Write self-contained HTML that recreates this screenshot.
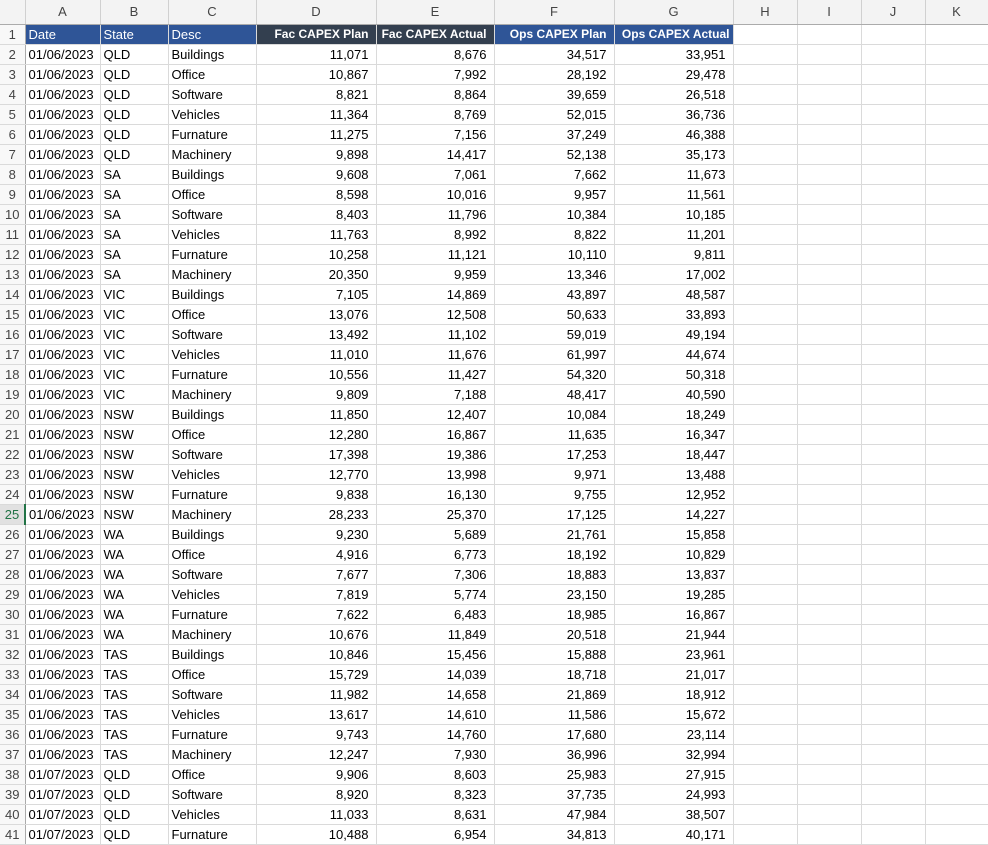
<!DOCTYPE html>
<html><head><meta charset="utf-8"><style>
body{margin:0;width:988px;height:832px;overflow:hidden;background:#fff;font-family:"Liberation Sans",Arial,sans-serif;}
table{border-collapse:collapse;table-layout:fixed;position:absolute;left:0;top:0;width:988px;}
td{height:19px;padding:0 3px;border-right:1px solid #dadada;border-bottom:1px solid #dadada;font-size:13px;color:#000;white-space:nowrap;overflow:hidden;box-sizing:border-box;}
tr.ch td{height:24px;background:#f3f3f3;color:#444;text-align:center;font-size:13px;border-bottom:1px solid #ababab;border-right:1px solid #d0d0d0}
td.rh{background:#f8f8f8;color:#444;text-align:center;padding:0;border-right:1px solid #ababab;border-bottom:1px solid #dadada}
td.n{text-align:right;padding-right:7px}
tr.h td.b{background:#2f5597;color:#fff;font-weight:normal}
tr.h td.d{background:#333f4f;color:#fff;font-weight:bold;font-size:12px;padding-left:0}
tr.h td.bb{background:#2f5597;color:#fff;font-weight:bold;font-size:12px;padding-left:0}
tr{height:20px}
td.sel{color:#217346;border-right:2px solid #217346;background:#e1e1e1}
</style></head><body>
<table>
<colgroup><col style="width:25px"><col style="width:75px"><col style="width:68px"><col style="width:88px"><col style="width:120px"><col style="width:118px"><col style="width:120px"><col style="width:119px"><col style="width:64px"><col style="width:64px"><col style="width:64px"><col style="width:63px"></colgroup>
<tr class="ch" style="height:24px"><td style="background:#f3f3f3"></td><td>A</td><td>B</td><td>C</td><td>D</td><td>E</td><td>F</td><td>G</td><td>H</td><td>I</td><td>J</td><td>K</td></tr>
<tr class="h"><td class="rh">1</td><td class="b">Date</td><td class="b">State</td><td class="b">Desc</td><td class="d n">Fac CAPEX Plan</td><td class="d n">Fac CAPEX Actual</td><td class="bb n">Ops CAPEX Plan</td><td class="bb n" style="padding-right:3px">Ops CAPEX Actual</td><td></td><td></td><td></td><td></td></tr>
<tr><td class="rh">2</td><td>01/06/2023</td><td>QLD</td><td>Buildings</td><td class="n">11,071</td><td class="n">8,676</td><td class="n">34,517</td><td class="n">33,951</td><td></td><td></td><td></td><td></td></tr>
<tr><td class="rh">3</td><td>01/06/2023</td><td>QLD</td><td>Office</td><td class="n">10,867</td><td class="n">7,992</td><td class="n">28,192</td><td class="n">29,478</td><td></td><td></td><td></td><td></td></tr>
<tr><td class="rh">4</td><td>01/06/2023</td><td>QLD</td><td>Software</td><td class="n">8,821</td><td class="n">8,864</td><td class="n">39,659</td><td class="n">26,518</td><td></td><td></td><td></td><td></td></tr>
<tr><td class="rh">5</td><td>01/06/2023</td><td>QLD</td><td>Vehicles</td><td class="n">11,364</td><td class="n">8,769</td><td class="n">52,015</td><td class="n">36,736</td><td></td><td></td><td></td><td></td></tr>
<tr><td class="rh">6</td><td>01/06/2023</td><td>QLD</td><td>Furnature</td><td class="n">11,275</td><td class="n">7,156</td><td class="n">37,249</td><td class="n">46,388</td><td></td><td></td><td></td><td></td></tr>
<tr><td class="rh">7</td><td>01/06/2023</td><td>QLD</td><td>Machinery</td><td class="n">9,898</td><td class="n">14,417</td><td class="n">52,138</td><td class="n">35,173</td><td></td><td></td><td></td><td></td></tr>
<tr><td class="rh">8</td><td>01/06/2023</td><td>SA</td><td>Buildings</td><td class="n">9,608</td><td class="n">7,061</td><td class="n">7,662</td><td class="n">11,673</td><td></td><td></td><td></td><td></td></tr>
<tr><td class="rh">9</td><td>01/06/2023</td><td>SA</td><td>Office</td><td class="n">8,598</td><td class="n">10,016</td><td class="n">9,957</td><td class="n">11,561</td><td></td><td></td><td></td><td></td></tr>
<tr><td class="rh">10</td><td>01/06/2023</td><td>SA</td><td>Software</td><td class="n">8,403</td><td class="n">11,796</td><td class="n">10,384</td><td class="n">10,185</td><td></td><td></td><td></td><td></td></tr>
<tr><td class="rh">11</td><td>01/06/2023</td><td>SA</td><td>Vehicles</td><td class="n">11,763</td><td class="n">8,992</td><td class="n">8,822</td><td class="n">11,201</td><td></td><td></td><td></td><td></td></tr>
<tr><td class="rh">12</td><td>01/06/2023</td><td>SA</td><td>Furnature</td><td class="n">10,258</td><td class="n">11,121</td><td class="n">10,110</td><td class="n">9,811</td><td></td><td></td><td></td><td></td></tr>
<tr><td class="rh">13</td><td>01/06/2023</td><td>SA</td><td>Machinery</td><td class="n">20,350</td><td class="n">9,959</td><td class="n">13,346</td><td class="n">17,002</td><td></td><td></td><td></td><td></td></tr>
<tr><td class="rh">14</td><td>01/06/2023</td><td>VIC</td><td>Buildings</td><td class="n">7,105</td><td class="n">14,869</td><td class="n">43,897</td><td class="n">48,587</td><td></td><td></td><td></td><td></td></tr>
<tr><td class="rh">15</td><td>01/06/2023</td><td>VIC</td><td>Office</td><td class="n">13,076</td><td class="n">12,508</td><td class="n">50,633</td><td class="n">33,893</td><td></td><td></td><td></td><td></td></tr>
<tr><td class="rh">16</td><td>01/06/2023</td><td>VIC</td><td>Software</td><td class="n">13,492</td><td class="n">11,102</td><td class="n">59,019</td><td class="n">49,194</td><td></td><td></td><td></td><td></td></tr>
<tr><td class="rh">17</td><td>01/06/2023</td><td>VIC</td><td>Vehicles</td><td class="n">11,010</td><td class="n">11,676</td><td class="n">61,997</td><td class="n">44,674</td><td></td><td></td><td></td><td></td></tr>
<tr><td class="rh">18</td><td>01/06/2023</td><td>VIC</td><td>Furnature</td><td class="n">10,556</td><td class="n">11,427</td><td class="n">54,320</td><td class="n">50,318</td><td></td><td></td><td></td><td></td></tr>
<tr><td class="rh">19</td><td>01/06/2023</td><td>VIC</td><td>Machinery</td><td class="n">9,809</td><td class="n">7,188</td><td class="n">48,417</td><td class="n">40,590</td><td></td><td></td><td></td><td></td></tr>
<tr><td class="rh">20</td><td>01/06/2023</td><td>NSW</td><td>Buildings</td><td class="n">11,850</td><td class="n">12,407</td><td class="n">10,084</td><td class="n">18,249</td><td></td><td></td><td></td><td></td></tr>
<tr><td class="rh">21</td><td>01/06/2023</td><td>NSW</td><td>Office</td><td class="n">12,280</td><td class="n">16,867</td><td class="n">11,635</td><td class="n">16,347</td><td></td><td></td><td></td><td></td></tr>
<tr><td class="rh">22</td><td>01/06/2023</td><td>NSW</td><td>Software</td><td class="n">17,398</td><td class="n">19,386</td><td class="n">17,253</td><td class="n">18,447</td><td></td><td></td><td></td><td></td></tr>
<tr><td class="rh">23</td><td>01/06/2023</td><td>NSW</td><td>Vehicles</td><td class="n">12,770</td><td class="n">13,998</td><td class="n">9,971</td><td class="n">13,488</td><td></td><td></td><td></td><td></td></tr>
<tr><td class="rh">24</td><td>01/06/2023</td><td>NSW</td><td>Furnature</td><td class="n">9,838</td><td class="n">16,130</td><td class="n">9,755</td><td class="n">12,952</td><td></td><td></td><td></td><td></td></tr>
<tr><td class="rh sel">25</td><td>01/06/2023</td><td>NSW</td><td>Machinery</td><td class="n">28,233</td><td class="n">25,370</td><td class="n">17,125</td><td class="n">14,227</td><td></td><td></td><td></td><td></td></tr>
<tr><td class="rh">26</td><td>01/06/2023</td><td>WA</td><td>Buildings</td><td class="n">9,230</td><td class="n">5,689</td><td class="n">21,761</td><td class="n">15,858</td><td></td><td></td><td></td><td></td></tr>
<tr><td class="rh">27</td><td>01/06/2023</td><td>WA</td><td>Office</td><td class="n">4,916</td><td class="n">6,773</td><td class="n">18,192</td><td class="n">10,829</td><td></td><td></td><td></td><td></td></tr>
<tr><td class="rh">28</td><td>01/06/2023</td><td>WA</td><td>Software</td><td class="n">7,677</td><td class="n">7,306</td><td class="n">18,883</td><td class="n">13,837</td><td></td><td></td><td></td><td></td></tr>
<tr><td class="rh">29</td><td>01/06/2023</td><td>WA</td><td>Vehicles</td><td class="n">7,819</td><td class="n">5,774</td><td class="n">23,150</td><td class="n">19,285</td><td></td><td></td><td></td><td></td></tr>
<tr><td class="rh">30</td><td>01/06/2023</td><td>WA</td><td>Furnature</td><td class="n">7,622</td><td class="n">6,483</td><td class="n">18,985</td><td class="n">16,867</td><td></td><td></td><td></td><td></td></tr>
<tr><td class="rh">31</td><td>01/06/2023</td><td>WA</td><td>Machinery</td><td class="n">10,676</td><td class="n">11,849</td><td class="n">20,518</td><td class="n">21,944</td><td></td><td></td><td></td><td></td></tr>
<tr><td class="rh">32</td><td>01/06/2023</td><td>TAS</td><td>Buildings</td><td class="n">10,846</td><td class="n">15,456</td><td class="n">15,888</td><td class="n">23,961</td><td></td><td></td><td></td><td></td></tr>
<tr><td class="rh">33</td><td>01/06/2023</td><td>TAS</td><td>Office</td><td class="n">15,729</td><td class="n">14,039</td><td class="n">18,718</td><td class="n">21,017</td><td></td><td></td><td></td><td></td></tr>
<tr><td class="rh">34</td><td>01/06/2023</td><td>TAS</td><td>Software</td><td class="n">11,982</td><td class="n">14,658</td><td class="n">21,869</td><td class="n">18,912</td><td></td><td></td><td></td><td></td></tr>
<tr><td class="rh">35</td><td>01/06/2023</td><td>TAS</td><td>Vehicles</td><td class="n">13,617</td><td class="n">14,610</td><td class="n">11,586</td><td class="n">15,672</td><td></td><td></td><td></td><td></td></tr>
<tr><td class="rh">36</td><td>01/06/2023</td><td>TAS</td><td>Furnature</td><td class="n">9,743</td><td class="n">14,760</td><td class="n">17,680</td><td class="n">23,114</td><td></td><td></td><td></td><td></td></tr>
<tr><td class="rh">37</td><td>01/06/2023</td><td>TAS</td><td>Machinery</td><td class="n">12,247</td><td class="n">7,930</td><td class="n">36,996</td><td class="n">32,994</td><td></td><td></td><td></td><td></td></tr>
<tr><td class="rh">38</td><td>01/07/2023</td><td>QLD</td><td>Office</td><td class="n">9,906</td><td class="n">8,603</td><td class="n">25,983</td><td class="n">27,915</td><td></td><td></td><td></td><td></td></tr>
<tr><td class="rh">39</td><td>01/07/2023</td><td>QLD</td><td>Software</td><td class="n">8,920</td><td class="n">8,323</td><td class="n">37,735</td><td class="n">24,993</td><td></td><td></td><td></td><td></td></tr>
<tr><td class="rh">40</td><td>01/07/2023</td><td>QLD</td><td>Vehicles</td><td class="n">11,033</td><td class="n">8,631</td><td class="n">47,984</td><td class="n">38,507</td><td></td><td></td><td></td><td></td></tr>
<tr><td class="rh">41</td><td>01/07/2023</td><td>QLD</td><td>Furnature</td><td class="n">10,488</td><td class="n">6,954</td><td class="n">34,813</td><td class="n">40,171</td><td></td><td></td><td></td><td></td></tr>
</table>
</body></html>
